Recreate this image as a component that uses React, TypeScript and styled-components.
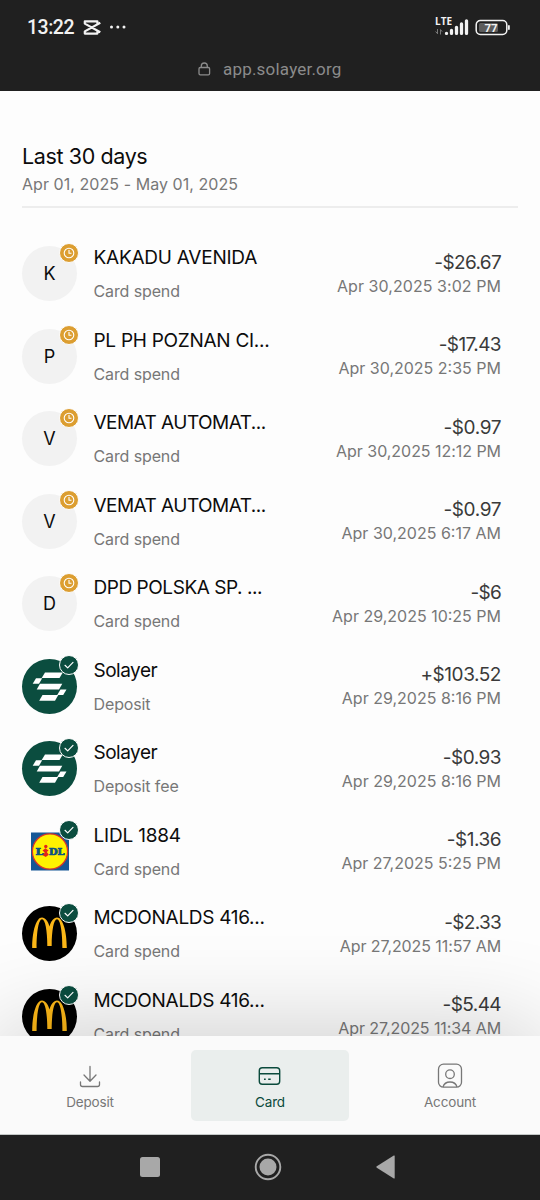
import React from "react";
import styled, { createGlobalStyle } from "styled-components";

const Global = createGlobalStyle`
  * { box-sizing: border-box; }
  body { margin: 0; background: #fdfdfd; font-family: Inter, "Liberation Sans", sans-serif; }
`;

const Screen = styled.div`
  width: 540px;
  height: 1200px;
  overflow: hidden;
  display: flex;
  flex-direction: column;
  background: #fdfdfd;
`;

const TopChrome = styled.header`
  height: 91px;
  flex: none;
  background: #202020;
  position: relative;
  z-index: 2;
`;

const StatusBar = styled.div`
  height: 54px;
  padding: 0 29px 0 27px;
  display: flex;
  align-items: center;
  justify-content: space-between;
`;

const StatusGroup = styled.div<{ $gap?: number }>`
  display: flex;
  align-items: center;
  gap: ${(p) => p.$gap ?? 0}px;
`;

const Clock = styled.span`
  font: 500 19.5px/24px Roboto, sans-serif;
  color: #f2f2f2;
  width: 56px;
  padding-top: 1px;
  letter-spacing: -0.5px;
`;

const AddressBar = styled.div`
  height: 30px;
  padding-left: 198px;
  display: flex;
  align-items: center;
  gap: 12px;
`;

const Address = styled.span`
  font: 400 17px/22px Roboto, sans-serif;
  letter-spacing: 0.2px;
  color: #8b8b8b;
`;

const Content = styled.main`
  flex: 1;
  min-height: 0;
  overflow: hidden;
  padding: 51px 22px 0;
`;

const PeriodHeader = styled.section`
  border-bottom: 2px solid #ededed;
  height: 66px;
  margin-bottom: 38px;
`;

const PeriodTitle = styled.h1`
  margin: 0;
  font-size: 21.5px;
  font-weight: 400;
  line-height: 28px;
  letter-spacing: -0.38px;
  color: #0c0c0c;
`;

const PeriodRange = styled.div`
  margin-top: 2px;
  font-size: 16px;
  line-height: 25px;
  letter-spacing: 0.06px;
  color: #777;
`;

const Row = styled.article`
  height: 82.5px;
  display: flex;
  padding-right: 17px;
  white-space: nowrap;
`;

const Avatar = styled.div<{ $bg: string }>`
  position: relative;
  flex: none;
  width: 55px;
  height: 55px;
  border-radius: 50%;
  background: ${(p) => p.$bg};
  display: flex;
  align-items: center;
  justify-content: center;
  font-size: 18px;
  color: #0c0c0c;
`;

const Badge = styled.span<{ $bg: string }>`
  position: absolute;
  top: -3.5px;
  right: -2px;
  width: 20px;
  height: 20px;
  border-radius: 50%;
  border: 1px solid #fdfdfd;
  background: ${(p) => p.$bg};
  display: flex;
  align-items: center;
  justify-content: center;
`;

const Details = styled.div`
  flex: 1;
  padding-left: 16.5px;
`;

const Merchant = styled.div<{ $track: number }>`
  font-size: 19px;
  line-height: 24px;
  letter-spacing: ${(p) => p.$track}px;
  color: #0c0c0c;
`;

const Kind = styled.div`
  margin-top: 10px;
  font-size: 16px;
  line-height: 22px;
  letter-spacing: -0.12px;
  color: #777;
`;

const Figures = styled.div`
  padding-top: 4.5px;
  text-align: right;
`;

const Amount = styled.div<{ $track: number }>`
  font-size: 19px;
  line-height: 24px;
  letter-spacing: ${(p) => p.$track}px;
  color: #3a3a3a;
`;

const When = styled.div<{ $track: number }>`
  font-size: 16px;
  line-height: 23px;
  letter-spacing: ${(p) => p.$track}px;
  color: #777;
`;

const TabBar = styled.nav`
  position: relative;
  z-index: 1;
  flex: none;
  height: 99px;
  padding: 14px 11px;
  display: grid;
  grid-template-columns: repeat(3, 158px);
  justify-content: space-between;
  background: #fafafa;
  border-bottom: 1px solid #c4c8c7;
  box-shadow: 0 0 100px rgba(0, 0, 0, 0.22);
`;

const Tab = styled.div<{ $active?: boolean }>`
  height: 71px;
  border-radius: 5px;
  background: ${(p) => (p.$active ? "#eaeeed" : "transparent")};
  color: ${(p) => (p.$active ? "#0b4a3c" : "#777")};
  display: flex;
  flex-direction: column;
  align-items: center;
  padding-top: 12px;
  font-size: 13.5px;
  line-height: 18px;
  letter-spacing: -0.15px;
  gap: 3px;
`;

const SystemBar = styled.footer`
  position: relative;
  z-index: 2;
  flex: none;
  height: 65px;
  padding: 0 144px 1px 140px;
  background: #202020;
  display: flex;
  align-items: center;
  justify-content: space-between;
`;

function CapCutGlyph() {
  return (
    <svg width="18" height="15" viewBox="0 0 18 15" fill="none" stroke="#f2f2f2" strokeWidth="2.200" strokeLinejoin="round">
      <path d="M17.300 2.800 1.800 11.400v2.200h12.600v-2M17.300 12.200 1.800 3.600V1.400h12.600v2" />
    </svg>
  );
}

function SignalCluster() {
  return (
    <svg width="34" height="22" viewBox="0 -1 34 22">
      <text x="0" y="8.300" fontFamily="Open Sans" fontWeight="700" fontSize="10.500" fill="#f2f2f2" textLength="17" lengthAdjust="spacingAndGlyphs">LTE</text>
      <path d="M2.500 12v5M.6 14.500l1.900 2.200M5.500 17.500v-5l1.700 2.200" stroke="#777" fill="none" strokeWidth="1" />
      <g stroke="#f2f2f2" strokeWidth="3.300" strokeLinecap="round">
        <path d="M11.500 16.300v.1M16.500 13.500v2.900M21.500 10.300v6.100M26.500 7v9.400M31.500 3.800v12.600" />
      </g>
    </svg>
  );
}

function Battery() {
  return (
    <svg width="36" height="17" viewBox="0 0 36 17">
      <rect x="1.200" y="1.500" width="30.600" height="14" rx="4.200" fill="none" stroke="#f2f2f2" strokeWidth="1.500" />
      <rect x="4" y="4" width="19" height="9" rx="1.500" fill="#5c5c5c" />
      <rect x="33" y="6" width="1.800" height="5" rx=".9" fill="#f2f2f2" />
      <text x="16" y="12.600" textAnchor="middle" fontFamily="Roboto" fontWeight="700" fontSize="11.500" fill="#f2f2f2">77</text>
    </svg>
  );
}

function LockGlyph() {
  return (
    <svg width="13" height="14" viewBox="0 0 13 14" fill="none" stroke="#8b8b8b" strokeWidth="1.300">
      <rect x="1" y="5.500" width="10.600" height="7.300" rx="1.300" />
      <path d="M3.300 5.500V4a3 3 0 0 1 6 0v1.500" />
    </svg>
  );
}

function SolayerLogo() {
  return (
    <svg width="55" height="55" viewBox="0 0 55 55" fill="#fff">
      <path d="M23 13.500h17.800l-3.300 5.600H19.700z" />
      <path d="M14 19.300h6.200l-3.200 5.400h-6.300z" />
      <path d="M18 24.800h22.300L37 30.500H14.700z" />
      <path d="M38.500 30.500h6l-3.300 5.500h-6z" />
      <path d="M20.500 36h15.800l-3.300 5.700H17.200z" />
    </svg>
  );
}

function LidlLogo() {
  return (
    <svg width="55" height="55" viewBox="0 0 55 55">
      <rect x="9" y="8.500" width="38" height="38" fill="#155796" />
      <circle cx="28" cy="27.500" r="17.600" fill="#fff200" stroke="#d9352a" strokeWidth="1.300" />
      <g fontFamily="DejaVu Serif" fontWeight="700" fontSize="8.600" fill="#0d5383" stroke="#0d5383" strokeWidth=".7">
        <text x="13.500" y="30.800" textLength="8" lengthAdjust="spacingAndGlyphs">L</text>
        <text x="27" y="30.800" textLength="15.500" lengthAdjust="spacingAndGlyphs">DL</text>
      </g>
      <g fill="#e2231a">
        <circle cx="23.800" cy="22.500" r="1.700" />
        <path d="m20.500 26.500 3-2.200 3 2.200-1.700 1.500 2 2.800-3.100 2.100-2.900-1.700 1.900-2.800z" />
      </g>
    </svg>
  );
}

function ArchesLogo() {
  return (
    <svg width="55" height="55" viewBox="0 0 55 55" fill="#fbb718">
      <path d="M10.200 42C10.200 25 14.200 11.500 20 11.500 23.200 11.500 26 15 27.500 20.500 29 15 31.800 11.500 35 11.500 40.800 11.500 44.800 25 44.800 42H40.400C40.400 25.500 38.300 13.300 35 13.300 31.800 13.300 29.700 24.500 29.700 40H25.300C25.300 24.500 23.200 13.300 20 13.300 16.700 13.300 14.600 25.500 14.600 42z" />
    </svg>
  );
}

function StatusBadge({ pending }: { pending: boolean }) {
  return (
    <Badge $bg={pending ? "#dc9e31" : "#0b4d3f"}>
      {pending ? (
        <svg width="12" height="12" viewBox="0 0 12 12" fill="none" stroke="#fff" strokeWidth="1.100">
          <circle cx="6" cy="6" r="4.800" />
          <path d="M6 3v3.300h2.500" />
        </svg>
      ) : (
        <svg width="12" height="12" viewBox="0 0 12 12" fill="none" stroke="#fff" strokeWidth="1.200" strokeLinecap="round" strokeLinejoin="round">
          <path d="m2 6.300 2.700 2.600L10 3.400" />
        </svg>
      )}
    </Badge>
  );
}

type Brand = "solayer" | "lidl" | "arches";

interface Entry {
  name: string;
  nameTrack: number;
  kind: string;
  amount: string;
  amountTrack: number;
  when: string;
  whenTrack?: number;
  brand?: Brand;
}

const entries: Entry[] = [
  { name: "KAKADU AVENIDA", nameTrack: -0.24, kind: "Card spend", amount: "-$26.67", amountTrack: -0.65, when: "Apr 30,2025 3:02 PM", whenTrack: 0.06 },
  { name: "PL PH POZNAN CI...", nameTrack: -0.28, kind: "Card spend", amount: "-$17.43", amountTrack: -0.6, when: "Apr 30,2025 2:35 PM" },
  { name: "VEMAT AUTOMAT...", nameTrack: -0.53, kind: "Card spend", amount: "-$0.97", amountTrack: -0.4, when: "Apr 30,2025 12:12 PM", whenTrack: -0.04 },
  { name: "VEMAT AUTOMAT...", nameTrack: -0.53, kind: "Card spend", amount: "-$0.97", amountTrack: -0.4, when: "Apr 30,2025 6:17 AM" },
  { name: "DPD POLSKA SP. ...", nameTrack: -0.45, kind: "Card spend", amount: "-$6", amountTrack: -0.7, when: "Apr 29,2025 10:25 PM" },
  { name: "Solayer", nameTrack: -0.5, kind: "Deposit", amount: "+$103.52", amountTrack: -0.45, when: "Apr 29,2025 8:16 PM", brand: "solayer" },
  { name: "Solayer", nameTrack: -0.5, kind: "Deposit fee", amount: "-$0.93", amountTrack: -0.5, when: "Apr 29,2025 8:16 PM", brand: "solayer" },
  { name: "LIDL 1884", nameTrack: -0.2, kind: "Card spend", amount: "-$1.36", amountTrack: -0.5, when: "Apr 27,2025 5:25 PM", brand: "lidl" },
  { name: "MCDONALDS 416...", nameTrack: -0.3, kind: "Card spend", amount: "-$2.33", amountTrack: -0.7, when: "Apr 27,2025 11:57 AM", whenTrack: -0.09, brand: "arches" },
  { name: "MCDONALDS 416...", nameTrack: -0.3, kind: "Card spend", amount: "-$5.44", amountTrack: -0.6, when: "Apr 27,2025 11:34 AM", whenTrack: -0.09, brand: "arches" },
];

const brandFill: Record<Brand, string> = { solayer: "#0b4d3f", lidl: "transparent", arches: "#000" };
const brandLogo: Record<Brand, React.ReactNode> = {
  solayer: <SolayerLogo />,
  lidl: <LidlLogo />,
  arches: <ArchesLogo />,
};

function Transaction({ entry }: { entry: Entry }) {
  const { brand } = entry;
  return (
    <Row>
      <Avatar $bg={brand ? brandFill[brand] : "#f2f2f2"}>
        {brand ? brandLogo[brand] : entry.name[0]}
        <StatusBadge pending={!brand} />
      </Avatar>
      <Details>
        <Merchant $track={entry.nameTrack}>{entry.name}</Merchant>
        <Kind>{entry.kind}</Kind>
      </Details>
      <Figures>
        <Amount $track={entry.amountTrack}>{entry.amount}</Amount>
        <When $track={entry.whenTrack ?? 0}>{entry.when}</When>
      </Figures>
    </Row>
  );
}

export default function App() {
  return (
    <Screen>
      <Global />
      <TopChrome>
        <StatusBar>
          <StatusGroup>
            <Clock>13:22</Clock>
            <CapCutGlyph />
            <svg width="26" height="6" viewBox="0 0 26 6" fill="#f2f2f2">
              <circle cx="10.500" cy="3" r="1.500" />
              <circle cx="16.800" cy="3" r="1.500" />
              <circle cx="23" cy="3" r="1.500" />
            </svg>
          </StatusGroup>
          <StatusGroup $gap={6}>
            <SignalCluster />
            <Battery />
          </StatusGroup>
        </StatusBar>
        <AddressBar>
          <LockGlyph />
          <Address>app.solayer.org</Address>
        </AddressBar>
      </TopChrome>
      <Content>
        <PeriodHeader>
          <PeriodTitle>Last 30 days</PeriodTitle>
          <PeriodRange>Apr 01, 2025 - May 01, 2025</PeriodRange>
        </PeriodHeader>
        {entries.map((entry, i) => (
          <Transaction key={i} entry={entry} />
        ))}
      </Content>
      <TabBar>
        <Tab>
          <svg width="24" height="28" viewBox="0 0 24 28" fill="none" stroke="currentColor" strokeWidth="1.300" strokeLinecap="round" strokeLinejoin="round">
            <path d="M12 4.500v14.500M6 13l6 6.200 6-6.200M2.500 20v2.500a2 2 0 0 0 2 2h15a2 2 0 0 0 2-2V20" />
          </svg>
          Deposit
        </Tab>
        <Tab $active>
          <svg width="24" height="28" viewBox="0 0 24 28" fill="none" stroke="currentColor" strokeWidth="1.400">
            <rect x="1.300" y="5.700" width="20.400" height="16.600" rx="3" />
            <path d="M1.300 11.700h20.400M6 17.300h1.700M10.200 17.300h2.500" />
          </svg>
          Card
        </Tab>
        <Tab>
          <svg width="26" height="28" viewBox="0 0 26 28" fill="none" stroke="currentColor" strokeWidth="1.300">
            <rect x="1.500" y="2.200" width="23" height="23" rx="5" />
            <circle cx="13" cy="12.200" r="4.300" />
            <path d="M6 25c1-3.500 3.500-5 7-5s6 1.500 7 5" />
          </svg>
          Account
        </Tab>
      </TabBar>
      <SystemBar>
        <svg width="20" height="20" viewBox="0 0 20 20" fill="#a8a8a8">
          <rect width="20" height="20" rx="2.500" />
        </svg>
        <svg width="28" height="28" viewBox="0 0 28 28">
          <circle cx="14" cy="14" r="8.500" fill="#a8a8a8" />
          <circle cx="14" cy="14" r="12.300" fill="none" stroke="#a8a8a8" strokeWidth="1.900" />
        </svg>
        <svg width="20" height="24" viewBox="0 0 20 24" fill="#a8a8a8">
          <path d="m.8 11.300 17-10.700q.9-.5.9.5v21.800q0 1-.9.500L.8 12.700q-1-.7 0-1.400z" />
        </svg>
      </SystemBar>
    </Screen>
  );
}
